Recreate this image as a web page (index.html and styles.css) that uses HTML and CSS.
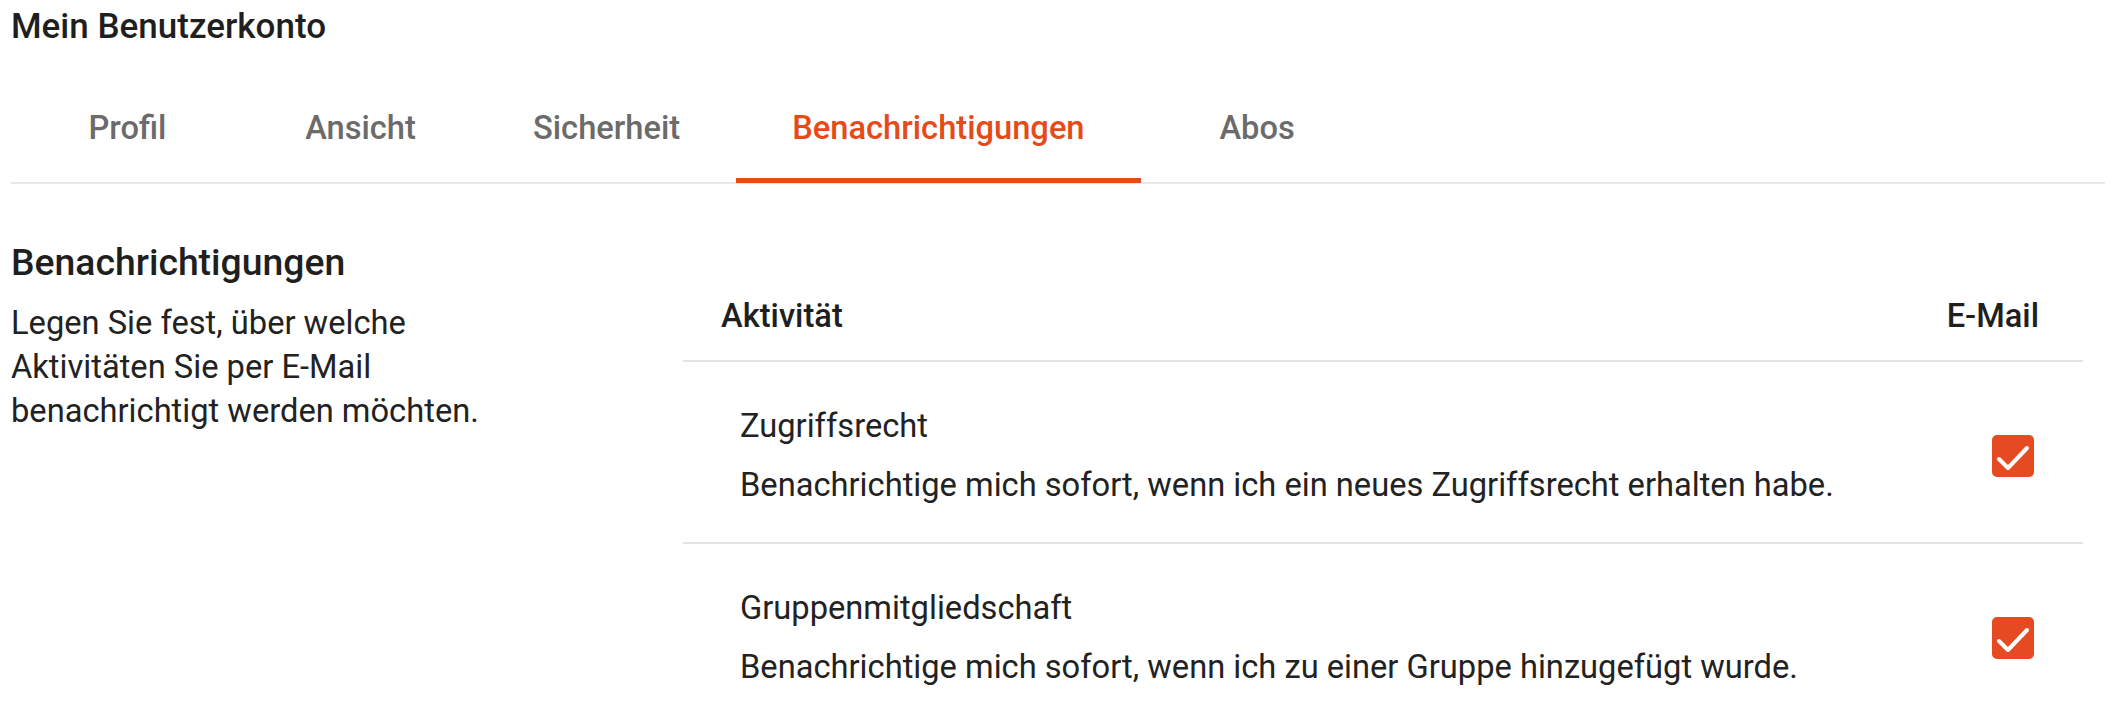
FILE: index.html
```html
<!DOCTYPE html>
<html lang="de">
<head>
<meta charset="utf-8">
<title>Mein Benutzerkonto</title>
<link rel="stylesheet" href="styles.css">
</head>
<body>
<div class="page">
  <h1 class="title">Mein Benutzerkonto</h1>
  <nav class="tabs">
    <a class="tab">Profil</a>
    <a class="tab">Ansicht</a>
    <a class="tab">Sicherheit</a>
    <a class="tab active">Benachrichtigungen</a>
    <a class="tab">Abos</a>
  </nav>
  <section class="content">
    <div class="intro">
      <h2 class="heading">Benachrichtigungen</h2>
      <p class="lead">Legen Sie fest, über welche Aktivitäten Sie per E-Mail benachrichtigt werden möchten.</p>
    </div>
    <div class="table">
      <div class="thead">
        <span>Aktivität</span>
        <span>E-Mail</span>
      </div>
      <div class="row">
        <div class="info">
          <div class="name">Zugriffsrecht</div>
          <div class="desc">Benachrichtige mich sofort, wenn ich ein neues Zugriffsrecht erhalten habe.</div>
        </div>
        <span class="check"><svg viewBox="0 0 42 42" width="42" height="42"><polyline points="7,24 16,33 35,13" fill="none" stroke="#fff" stroke-width="4" stroke-linecap="round" stroke-linejoin="round"/></svg></span>
      </div>
      <div class="row">
        <div class="info">
          <div class="name">Gruppenmitgliedschaft</div>
          <div class="desc">Benachrichtige mich sofort, wenn ich zu einer Gruppe hinzugefügt wurde.</div>
        </div>
        <span class="check"><svg viewBox="0 0 42 42" width="42" height="42"><polyline points="7,24 16,33 35,13" fill="none" stroke="#fff" stroke-width="4" stroke-linecap="round" stroke-linejoin="round"/></svg></span>
      </div>
    </div>
  </section>
</div>
</body>
</html>
```

FILE: styles.css
```css
* { box-sizing: border-box; }
html, body { margin: 0; padding: 0; background: #fff; }
body {
  font-family: Roboto, "Noto Sans", "Liberation Sans", sans-serif;
  color: #222;
}
.page {
  padding: 0 7px 0 11px;
}
.title {
  margin: 0;
  padding-top: 7px;
  font-size: 35px;
  line-height: 40px;
  font-weight: 500;
  color: #1f1f1f;
}
.tabs {
  display: flex;
  border-bottom: 2px solid #e8e8e8;
}
.tab {
  position: relative;
  min-width: 233px;
  padding: 62px 56px 35px;
  font-size: 32.67px;
  line-height: 38px;
  font-weight: 500;
  color: #6b6b6b;
  text-align: center;
  white-space: nowrap;
}
.tab.active {
  color: #e64a19;
}
.tab.active::after {
  content: "";
  position: absolute;
  left: 0;
  right: 0;
  bottom: -1px;
  height: 5px;
  background: #e64a19;
}
.content {
  display: grid;
  grid-template-columns: 672px 1fr;
  align-items: start;
  padding-right: 22px;
}
.intro {
  padding-top: 56px;
}
.heading {
  margin: 0;
  font-size: 37.33px;
  line-height: 44px;
  font-weight: 500;
  color: #1f1f1f;
}
.lead {
  margin: 17px 0 0;
  width: 530px;
  font-size: 32.67px;
  line-height: 44px;
  color: #222;
}
.table {
  margin-top: 113px;
}
.thead {
  display: flex;
  justify-content: space-between;
  padding: 0 44px 25px 38px;
  border-bottom: 2px solid #e4e4e4;
  font-size: 32.67px;
  line-height: 38px;
  font-weight: 500;
  color: #1f1f1f;
}
.row {
  display: flex;
  align-items: center;
  justify-content: space-between;
  padding: 45px 49px 38px 57px;
  border-bottom: 2px solid #e4e4e4;
}
.name, .desc {
  font-size: 32.67px;
  line-height: 38px;
  color: #222;
}
.desc {
  margin-top: 21px;
}
.check {
  display: flex;
  width: 42px;
  height: 42px;
  border-radius: 5px;
  background: #e64a22;
}
```
